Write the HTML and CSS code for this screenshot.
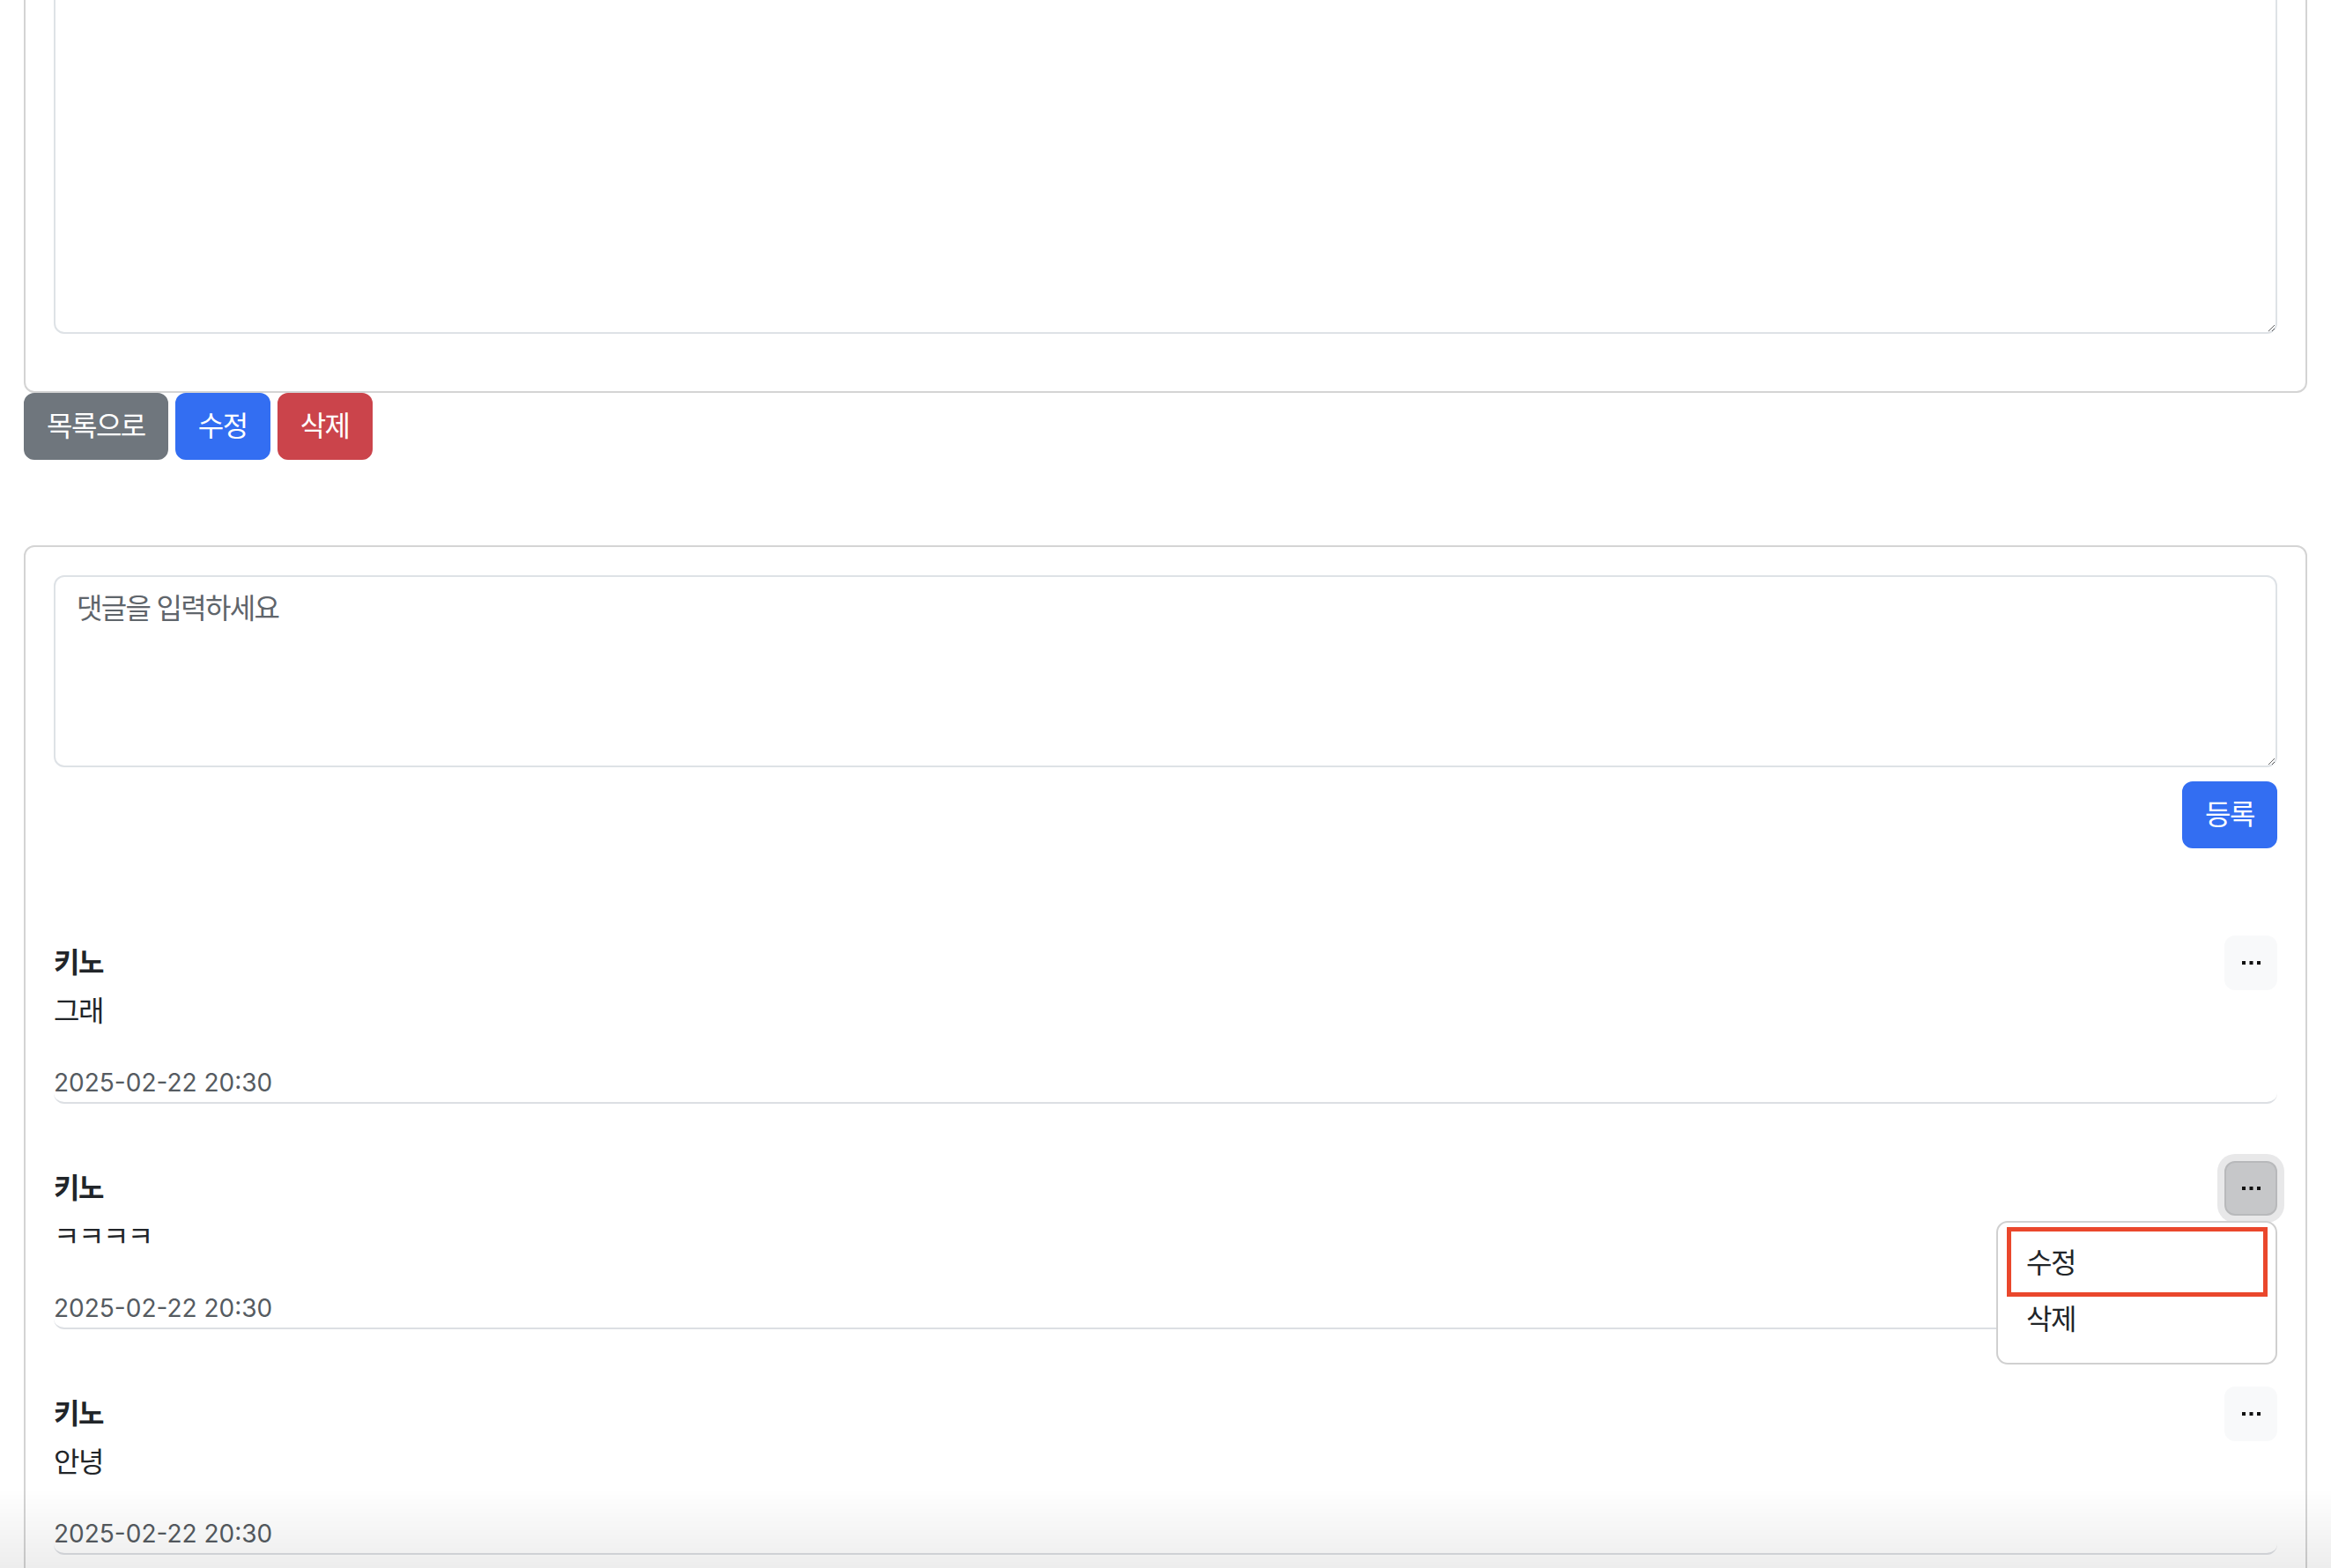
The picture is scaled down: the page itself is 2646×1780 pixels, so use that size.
FILE: index.html
```html
<!DOCTYPE html>
<html lang="ko">
<head>
<meta charset="utf-8">
<title>게시글</title>
<link rel="stylesheet" href="styles.css">
</head>
<body>
<div class="container">
  <div class="card card-post">
    <textarea class="field field-post" readonly></textarea>
  </div>
  <div class="actions">
    <button class="btn btn-secondary">목록으로</button>
    <button class="btn btn-primary">수정</button>
    <button class="btn btn-danger">삭제</button>
  </div>

  <div class="card card-comments">
    <textarea class="field field-comment" placeholder="댓글을 입력하세요"></textarea>
    <div class="submit-row">
      <button class="btn btn-primary">등록</button>
    </div>

    <ul class="comment-list">
      <li class="comment">
        <div class="comment-head">
          <strong class="comment-author">키노</strong>
          <div class="dropdown">
            <button class="btn-more" aria-label="더보기">
              <svg class="dots" width="21" height="4" viewBox="0 0 21 4"><rect x="0" y="0" width="4" height="4"/><rect x="8.5" y="0" width="4" height="4"/><rect x="17" y="0" width="4" height="4"/></svg>
            </button>
          </div>
        </div>
        <p class="comment-body">그래</p>
        <div class="comment-date">2025-02-22 20:30</div>
      </li>
      <li class="comment">
        <div class="comment-head">
          <strong class="comment-author">키노</strong>
          <div class="dropdown">
            <button class="btn-more is-active" aria-label="더보기">
              <svg class="dots" width="21" height="4" viewBox="0 0 21 4"><rect x="0" y="0" width="4" height="4"/><rect x="8.5" y="0" width="4" height="4"/><rect x="17" y="0" width="4" height="4"/></svg>
            </button>
            <ul class="dropdown-menu">
              <li><span class="dropdown-item">수정</span></li>
              <li><span class="dropdown-item">삭제</span></li>
              <li class="annotation"></li>
            </ul>
          </div>
        </div>
        <p class="comment-body">ㅋㅋㅋㅋ</p>
        <div class="comment-date">2025-02-22 20:30</div>
      </li>
      <li class="comment">
        <div class="comment-head">
          <strong class="comment-author">키노</strong>
          <div class="dropdown">
            <button class="btn-more" aria-label="더보기">
              <svg class="dots" width="21" height="4" viewBox="0 0 21 4"><rect x="0" y="0" width="4" height="4"/><rect x="8.5" y="0" width="4" height="4"/><rect x="17" y="0" width="4" height="4"/></svg>
            </button>
          </div>
        </div>
        <p class="comment-body">안녕</p>
        <div class="comment-date">2025-02-22 20:30</div>
      </li>
    </ul>
  </div>
</div>
<div class="screen-fade"></div>
</body>
</html>
```
FILE: styles.css
```css
html, body {
  margin: 0;
  height: 100%;
  overflow: hidden;
  background: #fff;
}

body {
  font-family: Inter, "Noto Sans CJK KR", sans-serif;
  font-size: 32px;
  line-height: 48px;
  color: #212529;
}

.container {
  width: 2592px;
  margin: 0 auto;
}

.card {
  border: 2px solid #d4d4d4;
  border-radius: 12px;
  padding: 32px;
  background: #fff;
}

.card-post {
  margin-top: -255px;
}

.field {
  display: block;
  width: 100%;
  box-sizing: border-box;
  border: 2px solid #dee2e6;
  border-radius: 12px;
  padding: 12px 24px;
  font-family: Inter, "Noto Sans CJK KR", sans-serif;
  font-size: 32px;
  line-height: 48px;
  letter-spacing: -1.7px;
  color: #212529;
  background: #fff;
  outline: none;
}

.field::placeholder {
  color: #5f656b;
  opacity: 1;
}

.field-post {
  height: 600px;
  margin-bottom: 33px;
}

.field-comment {
  height: 218px;
}

.actions {
  display: flex;
  gap: 8px;
}

.btn {
  font-family: Inter, "Noto Sans CJK KR", sans-serif;
  font-size: 32px;
  line-height: 48px;
  letter-spacing: -1.5px;
  padding: 12px 24px;
  border: 2px solid transparent;
  border-radius: 12px;
  color: #fff;
  cursor: pointer;
}

.btn-secondary {
  background: #6f767d;
  border-color: #6f767d;
}

.btn-primary {
  background: #336ef2;
  border-color: #336ef2;
}

.btn-danger {
  background: #cb444b;
  border-color: #cb444b;
}

.card-comments {
  margin-top: 97px;
}

.submit-row {
  display: flex;
  justify-content: flex-end;
  margin-top: 16px;
}

.comment-list {
  list-style: none;
  margin: 99px 0 0;
  padding: 0;
}

.comment {
  border-bottom: 2px solid #dcdfe3;
  border-radius: 12px;
  margin-bottom: 65px;
}

.comment-head {
  display: flex;
  justify-content: space-between;
  align-items: center;
}

.comment-author {
  font-weight: 700;
  font-size: 32px;
  letter-spacing: -1.5px;
}

.comment-body {
  margin: 0 0 35px;
  font-size: 32px;
  letter-spacing: -1.5px;
}

.comment-date {
  font-size: 28px;
  line-height: 44px;
  color: #555b61;
}

.dropdown {
  position: relative;
}

.btn-more {
  width: 60px;
  height: 62px;
  box-sizing: border-box;
  display: flex;
  align-items: center;
  justify-content: center;
  padding: 0;
  background: #f8f9fa;
  border: 2px solid #f8f9fa;
  border-radius: 12px;
  cursor: pointer;
}

.btn-more.is-active {
  background: #c6c7c9;
  border-color: #b8b9bb;
  box-shadow: 0 0 0 8px #e8e8e9;
}

.dots {
  display: block;
  fill: #111;
}

.dropdown-menu {
  position: absolute;
  top: calc(100% + 6px);
  right: 0;
  width: 319px;
  box-sizing: border-box;
  margin: 0;
  padding: 14px 0 17px;
  list-style: none;
  background: #fff;
  border: 2px solid #d0d0d0;
  border-radius: 13px;
  z-index: 2;
}

.dropdown-item {
  display: block;
  padding: 8px 32px;
  font-size: 32px;
  line-height: 48px;
  letter-spacing: -1.5px;
  color: #212529;
}

.annotation {
  position: absolute;
  left: 10px;
  top: 5px;
  width: 296px;
  height: 79px;
  box-sizing: border-box;
  border: 5px solid #ea472c;
}

.screen-fade {
  position: fixed;
  left: 0;
  right: 0;
  bottom: 0;
  height: 90px;
  background: linear-gradient(rgba(0, 0, 0, 0), rgba(0, 0, 0, 0.07));
  pointer-events: none;
}
```
